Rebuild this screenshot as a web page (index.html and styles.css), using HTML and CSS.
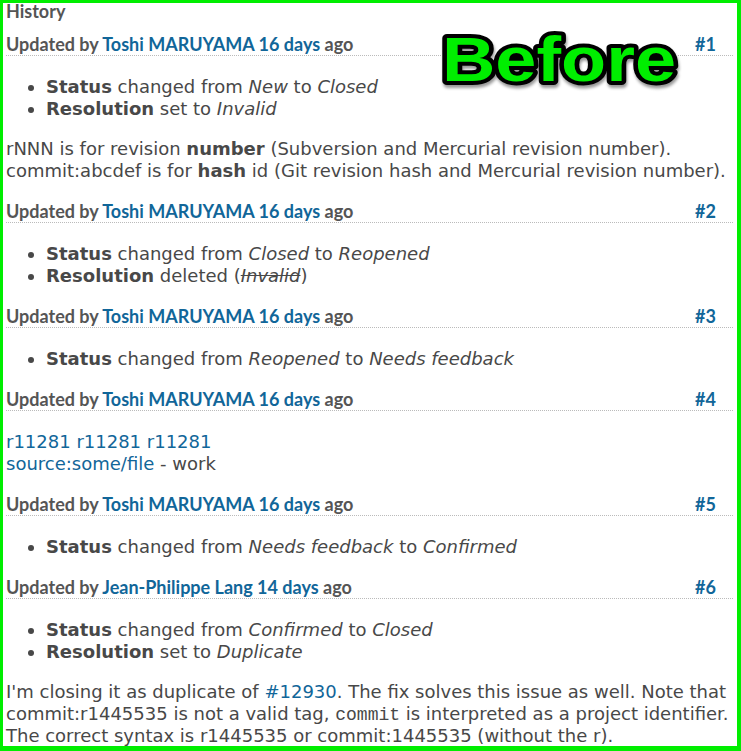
FILE: index.html
```html
<!DOCTYPE html>
<html>
<head>
<meta charset="utf-8">
<title>History</title>
<link rel="stylesheet" href="styles.css">
</head>
<body>
<div class="frame">
  <h3 class="history-title">History</h3>

  <div class="journal">
    <h4 class="journal-head"><span class="head-left">Updated by <a class="user">Toshi MARUYAMA</a> <a class="user">16 days</a> ago</span><a class="num">#1</a></h4>
    <ul class="details">
      <li><strong>Status</strong> changed from <i>New</i> to <i>Closed</i></li>
      <li><strong>Resolution</strong> set to <i>Invalid</i></li>
    </ul>
    <p class="wiki">rNNN is for revision <strong>number</strong> (Subversion and Mercurial revision number).<br>commit:abcdef is for <strong>hash</strong> id (Git revision hash and Mercurial revision number).</p>
  </div>

  <div class="journal">
    <h4 class="journal-head"><span class="head-left">Updated by <a class="user">Toshi MARUYAMA</a> <a class="user">16 days</a> ago</span><a class="num">#2</a></h4>
    <ul class="details">
      <li><strong>Status</strong> changed from <i>Closed</i> to <i>Reopened</i></li>
      <li><strong>Resolution</strong> deleted (<del><i>Invalid</i></del>)</li>
    </ul>
  </div>

  <div class="journal">
    <h4 class="journal-head"><span class="head-left">Updated by <a class="user">Toshi MARUYAMA</a> <a class="user">16 days</a> ago</span><a class="num">#3</a></h4>
    <ul class="details">
      <li><strong>Status</strong> changed from <i>Reopened</i> to <i>Needs feedback</i></li>
    </ul>
  </div>

  <div class="journal">
    <h4 class="journal-head"><span class="head-left">Updated by <a class="user">Toshi MARUYAMA</a> <a class="user">16 days</a> ago</span><a class="num">#4</a></h4>
    <p class="wiki"><a class="link">r11281</a> <a class="link">r11281</a> <a class="link">r11281</a><br><a class="link">source:some/file</a> - work</p>
  </div>

  <div class="journal">
    <h4 class="journal-head"><span class="head-left">Updated by <a class="user">Toshi MARUYAMA</a> <a class="user">16 days</a> ago</span><a class="num">#5</a></h4>
    <ul class="details">
      <li><strong>Status</strong> changed from <i>Needs feedback</i> to <i>Confirmed</i></li>
    </ul>
  </div>

  <div class="journal">
    <h4 class="journal-head"><span class="head-left">Updated by <a class="user">Jean-Philippe Lang</a> <a class="user">14 days</a> ago</span><a class="num">#6</a></h4>
    <ul class="details">
      <li><strong>Status</strong> changed from <i>Confirmed</i> to <i>Closed</i></li>
      <li><strong>Resolution</strong> set to <i>Duplicate</i></li>
    </ul>
    <p class="wiki">I'm closing it as duplicate of <a class="link">#12930</a>. The fix solves this issue as well. Note that<br>commit:r1445535 is not a valid tag, <code>commit</code> is interpreted as a project identifier.<br>The correct syntax is r1445535 or commit:1445535 (without the r).</p>
  </div>

  <div class="badge">
    <svg width="236" height="62" viewBox="0 0 236 62">
      <defs>
        <filter id="sh" x="-10%" y="-30%" width="120%" height="170%">
          <feDropShadow dx="1" dy="3" stdDeviation="1.6" flood-color="#000" flood-opacity="0.4"/>
        </filter>
      </defs>
      <text x="0" y="53" textLength="234" lengthAdjust="spacingAndGlyphs" class="badge-text" filter="url(#sh)">Before</text>
    </svg>
  </div>
</div>
</body>
</html>
```

FILE: styles.css
```css
html, body {
  margin: 0;
  padding: 0;
  background: #fff;
}

.frame {
  position: relative;
  box-sizing: border-box;
  width: 741px;
  height: 751px;
  border-style: solid;
  border-color: #00ee00;
  border-width: 3px 4px 5px 3px;
  padding: 0 4px 0 3px;
  overflow: hidden;
  font-family: "DejaVu Sans", Verdana, sans-serif;
  font-size: 18px;
  line-height: 22px;
  color: #484848;
}

.history-title {
  margin: 0;
  font-family: Lato, "Trebuchet MS", sans-serif;
  font-weight: bold;
  font-size: 18px;
  line-height: 16px;
  color: #555;
}

.journal {
  margin-top: 18px;
}

.journal:first-of-type {
  margin-top: 14px;
}

.journal-head {
  display: flex;
  justify-content: space-between;
  margin: 0;
  font-family: Lato, "Trebuchet MS", sans-serif;
  font-weight: bold;
  font-size: 18px;
  line-height: 22px;
  color: #555;
  border-bottom: 1px dotted #bbb;
}

.journal-head a {
  color: #169;
  text-decoration: none;
}

.num {
  margin-right: 17px;
}

.details {
  margin: 20px 0 0 0;
  padding-left: 40px;
}

.details li {
  list-style: disc;
}

.wiki {
  margin: 18px 0 0 0;
}

.journal-head + .wiki {
  margin-top: 20px;
}

.wiki a.link {
  color: #169;
  text-decoration: none;
}

.wiki code {
  font-family: "Liberation Mono", "Courier New", monospace;
  font-size: 18px;
  line-height: 1;
}

.badge {
  position: absolute;
  left: 439px;
  top: 25px;
  width: 236px;
  height: 62px;
  background: #fff;
}

.badge svg {
  display: block;
  overflow: visible;
}

.badge-text {
  font-family: "Liberation Sans", Arial, sans-serif;
  font-weight: bold;
  font-size: 63px;
  fill: #00ee00;
  stroke: #000;
  stroke-width: 8px;
  stroke-linejoin: round;
  paint-order: stroke fill;
}
```
